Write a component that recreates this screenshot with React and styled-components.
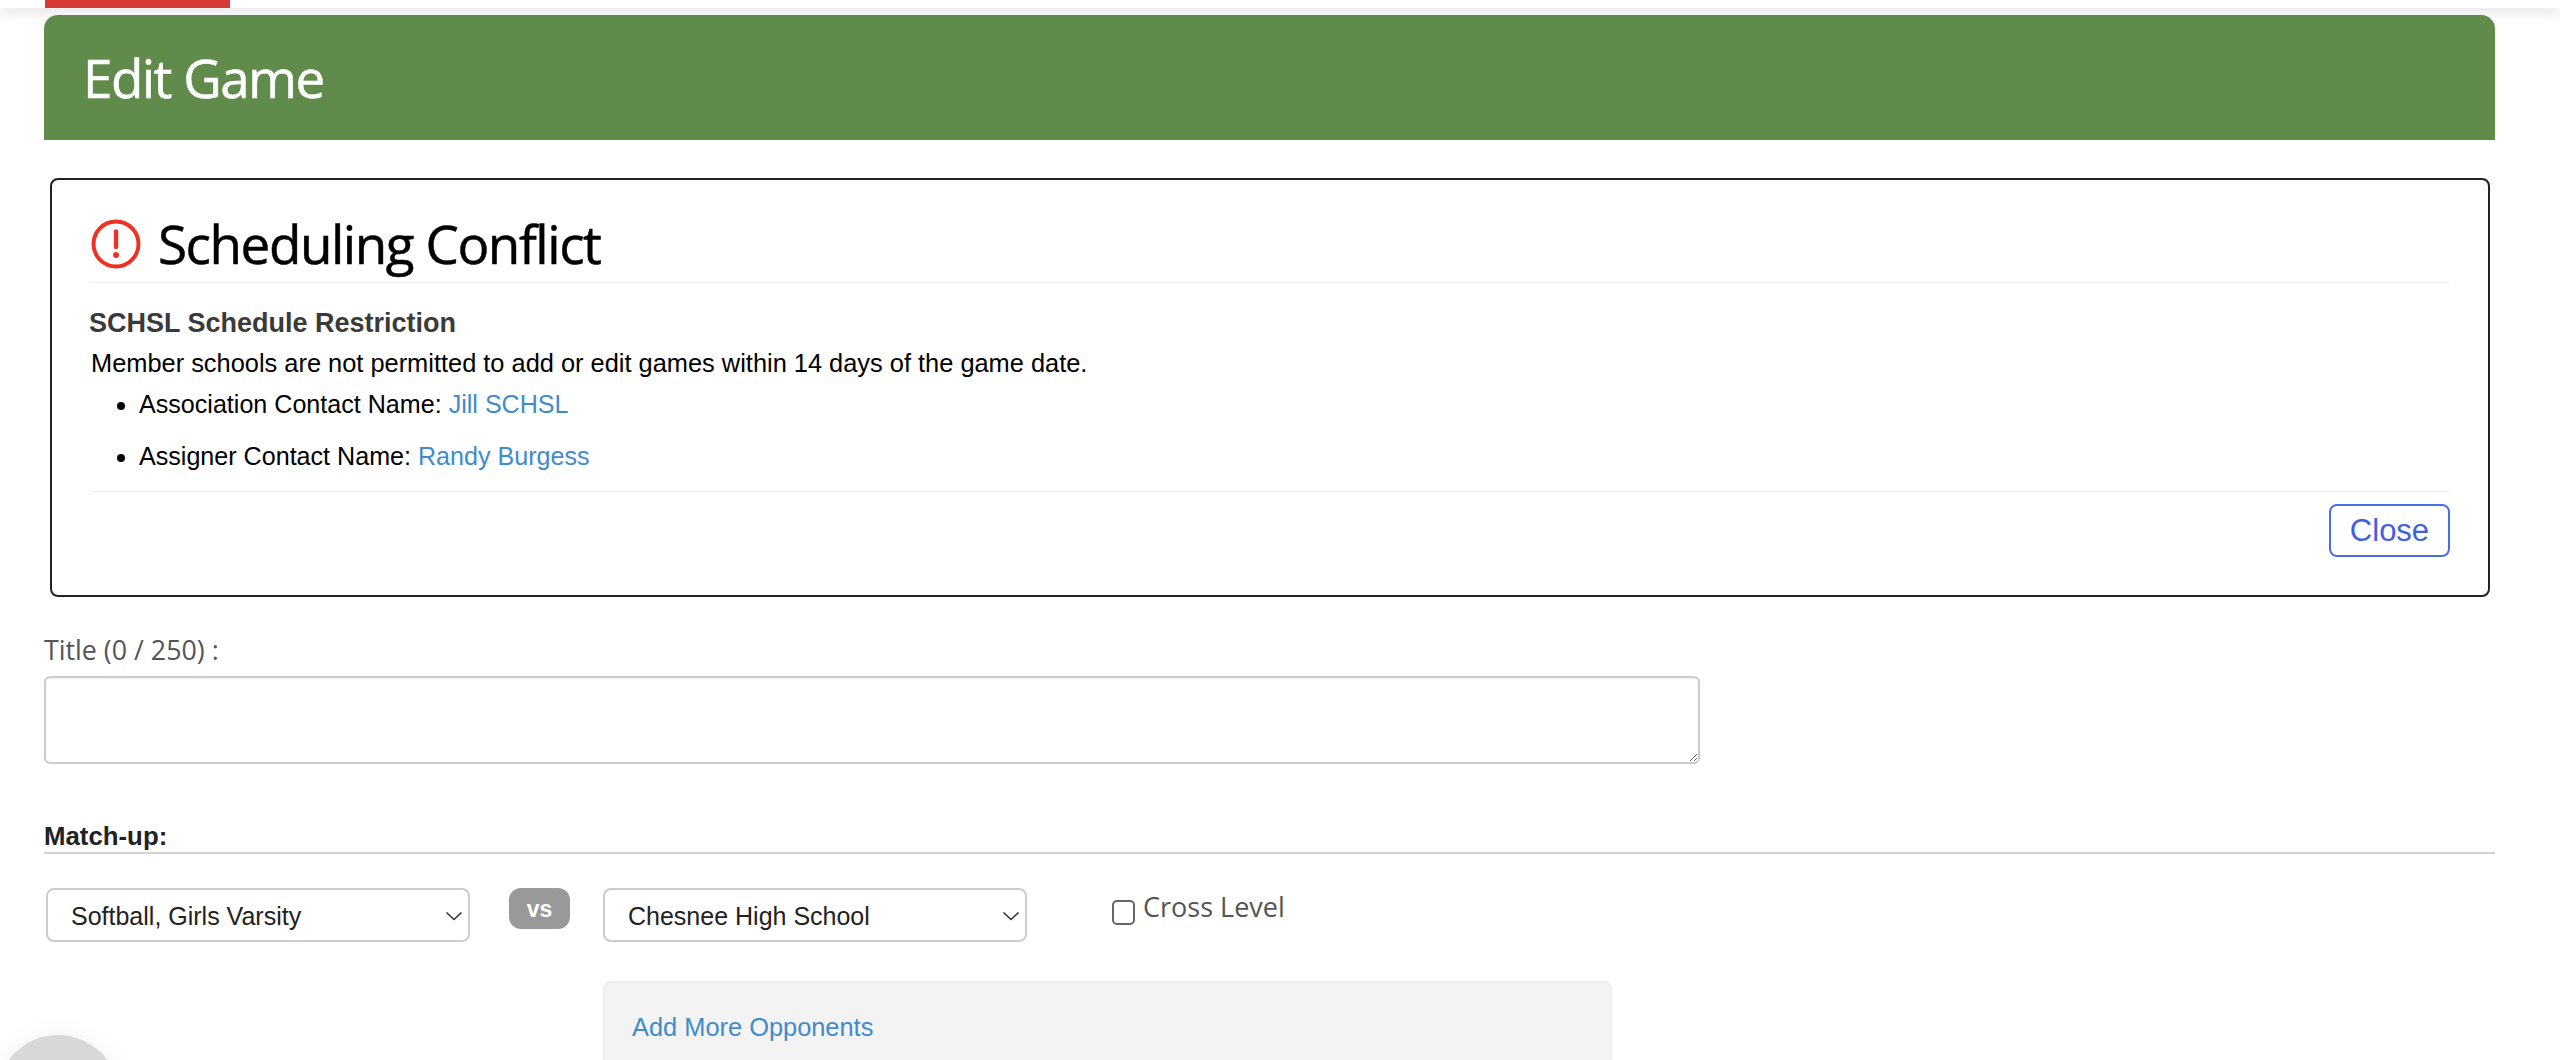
import React from 'react';
import styled, { createGlobalStyle } from 'styled-components';

const GlobalStyle = createGlobalStyle`
  html, body {
    margin: 0;
    height: 1060px;
    overflow: hidden;
    background: #fff;
    font-family: "Liberation Sans", Arial, sans-serif;
  }
  * { box-sizing: border-box; }
`;

const Page = styled.div`
  position: relative;
  height: 1060px;
  overflow: hidden;
`;

const TopBar = styled.div`
  height: 8px;
  padding-left: 45px;
  background: #fff;
  box-shadow: 0 3px 14px rgba(0, 0, 0, 0.16);
`;

const RedTab = styled.div`
  width: 185px;
  height: 8px;
  background: #d63a35;
`;

const Content = styled.div`
  position: relative;
  padding: 7px 65px 0 44px;
`;

const Header = styled.div`
  height: 125px;
  padding: 0 39px;
  display: flex;
  align-items: center;
  background: #618b4b;
  border-radius: 14px 14px 0 0;
  color: #fff;
  font-family: "Open Sans", sans-serif;
  font-size: 53px;
  letter-spacing: -1.55px;
  -webkit-text-stroke: 0.5px #fff;
`;

const Alert = styled.div`
  margin: 38px 5px 0 6px;
  height: 419px;
  padding: 0 39px 0 39px;
  border: 2px solid #222;
  border-radius: 8px;
  background: #fff;
`;

const AlertTitle = styled.div`
  height: 103px;
  display: flex;
  align-items: center;
  gap: 17px;
  padding: 25px 0 0 0;
  border-bottom: 1px solid #eee;
  font-family: "Open Sans", sans-serif;
  font-size: 53px;
  letter-spacing: -1.45px;
  -webkit-text-stroke: 0.5px #000;
  color: #000;
`;

const RuleName = styled.div`
  margin: 25px 0 0 -2px;
  font-size: 27px;
  line-height: 30px;
  font-weight: bold;
  color: #3a3a3a;
`;

const Message = styled.div`
  margin-top: 10px;
  font-size: 25.4px;
  line-height: 30px;
  color: #000;
`;

const ContactList = styled.ul`
  margin: 11px 0 0;
  padding: 0 0 0 48px;
  font-size: 25.1px;
`;

const Contact = styled.li`
  height: 52px;
  line-height: 30px;
  color: #000;
`;

const Link = styled.a`
  color: #428bca;
  text-decoration: none;
`;

const AlertFooter = styled.div`
  display: flex;
  justify-content: flex-end;
  margin-top: -2px;
  margin-right: -1px;
  padding-top: 12px;
  border-top: 1px solid #eee;
`;

const CloseButton = styled.button`
  width: 121px;
  height: 53px;
  padding: 0;
  border: 2px solid #4a6ce6;
  border-radius: 8px;
  background: #fff;
  color: #3f60e0;
  font-family: "Liberation Sans", Arial, sans-serif;
  font-size: 31px;
`;

const FieldLabel = styled.label`
  display: block;
  margin-top: 36px;
  line-height: 34px;
  font-family: "Open Sans", sans-serif;
  font-size: 26.8px;
  color: #555;
`;

const TitleInput = styled.textarea`
  display: block;
  width: 1656px;
  height: 88px;
  margin-top: 9px;
  border: 2px solid #ccc;
  border-radius: 6px;
  background: #fff;
  box-shadow: inset 0 1px 2px rgba(0, 0, 0, 0.08);
`;

const SectionTitle = styled.div`
  margin-top: 57px;
  height: 33px;
  line-height: 30px;
  border-bottom: 2px solid #d2d2d2;
  font-size: 25.8px;
  font-weight: bold;
  color: #222;
`;

const MatchRow = styled.div`
  display: flex;
  align-items: flex-start;
  margin: 34px 0 0 2px;
`;

const SelectBox = styled.div`
  position: relative;
  width: 424px;
  height: 54px;
`;

const Select = styled.select`
  width: 100%;
  height: 100%;
  padding: 2px 40px 0 23px;
  appearance: none;
  border: 2px solid #ccc;
  border-radius: 8px;
  background: #fff;
  color: #222;
  font-family: "Liberation Sans", Arial, sans-serif;
  font-size: 25px;
`;

const Chevron = styled.svg`
  position: absolute;
  top: 23px;
  right: 7px;
  width: 18px;
  height: 10px;
  pointer-events: none;
`;

const VsBadge = styled.div`
  width: 61px;
  height: 41px;
  margin: 0 33px 0 39px;
  padding-top: 2px;
  display: flex;
  align-items: center;
  justify-content: center;
  border-radius: 12px;
  background: #999;
  color: #fff;
  font-size: 23px;
  font-weight: bold;
`;

const CrossLevel = styled.label`
  display: flex;
  align-items: flex-start;
  gap: 8px;
  margin-left: 85px;
  padding-top: 1px;
  font-family: "Open Sans", sans-serif;
  font-size: 27px;
  line-height: 36px;
  color: #555;
`;

const CrossBox = styled.input`
  appearance: none;
  width: 23px;
  height: 25px;
  margin: 11px 0 0;
  border: 2px solid #666;
  border-radius: 5px;
  background: #fff;
`;

const OpponentsPanel = styled.div`
  width: 1009px;
  height: 120px;
  margin: 39px 0 0 559px;
  padding: 29px 27px;
  border: 2px solid #eee;
  border-radius: 8px;
  background: #f3f3f3;
  font-size: 25.4px;
  line-height: 30px;
`;

const HelpBubble = styled.div`
  position: absolute;
  left: -3px;
  top: 1035px;
  width: 122px;
  height: 122px;
  border-radius: 50%;
  background: #d8d8d8;
  box-shadow: 0 0 24px rgba(0, 0, 0, 0.06);
`;

const ConflictIcon = () => (
  <svg width="50" height="50" viewBox="0 0 50 50" fill="none">
    <circle cx="25" cy="25" r="22.5" stroke="#ee3124" strokeWidth="4" />
    <path d="M25 12.5V28" stroke="#ee3124" strokeWidth="4.4" strokeLinecap="round" />
    <circle cx="25" cy="36" r="3" fill="#ee3124" />
  </svg>
);

const SelectField = ({ value }) => (
  <SelectBox>
    <Select defaultValue={value}>
      <option>{value}</option>
    </Select>
    <Chevron viewBox="0 0 18 10" fill="none">
      <path d="M1.5 1.5L9 8.5L16.5 1.5" stroke="#333" strokeWidth="1.6" />
    </Chevron>
  </SelectBox>
);

export default function App() {
  return (
    <Page>
      <GlobalStyle />
      <TopBar>
        <RedTab />
      </TopBar>
      <Content>
        <Header>Edit Game</Header>
        <Alert>
          <AlertTitle>
            <ConflictIcon />
            Scheduling Conflict
          </AlertTitle>
          <RuleName>SCHSL Schedule Restriction</RuleName>
          <Message>Member schools are not permitted to add or edit games within 14 days of the game date.</Message>
          <ContactList>
            <Contact>
              Association Contact Name: <Link href="#">Jill SCHSL</Link>
            </Contact>
            <Contact>
              Assigner Contact Name: <Link href="#">Randy Burgess</Link>
            </Contact>
          </ContactList>
          <AlertFooter>
            <CloseButton>Close</CloseButton>
          </AlertFooter>
        </Alert>
        <FieldLabel>Title (0 / 250) :</FieldLabel>
        <TitleInput />
        <SectionTitle>Match-up:</SectionTitle>
        <MatchRow>
          <SelectField value="Softball, Girls Varsity" />
          <VsBadge>vs</VsBadge>
          <SelectField value="Chesnee High School" />
          <CrossLevel>
            <CrossBox type="checkbox" />
            Cross Level
          </CrossLevel>
        </MatchRow>
        <OpponentsPanel>
          <Link href="#">Add More Opponents</Link>
        </OpponentsPanel>
      </Content>
      <HelpBubble />
    </Page>
  );
}
